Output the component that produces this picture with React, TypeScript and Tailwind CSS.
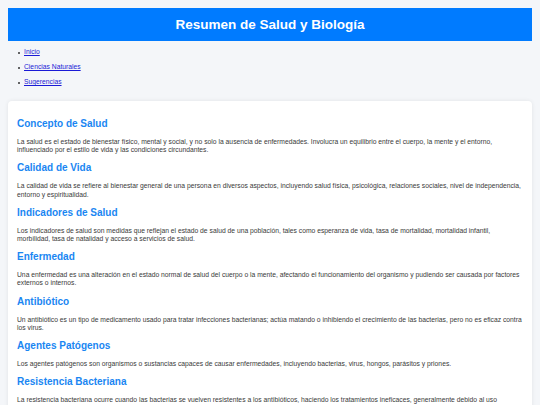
const links = ["Inicio", "Ciencias Naturales", "Sugerencias"];

const sections = [
  {
    title: "Concepto de Salud",
    text: "La salud es el estado de bienestar físico, mental y social, y no solo la ausencia de enfermedades. Involucra un equilibrio entre el cuerpo, la mente y el entorno, influenciado por el estilo de vida y las condiciones circundantes.",
  },
  {
    title: "Calidad de Vida",
    text: "La calidad de vida se refiere al bienestar general de una persona en diversos aspectos, incluyendo salud física, psicológica, relaciones sociales, nivel de independencia, entorno y espiritualidad.",
  },
  {
    title: "Indicadores de Salud",
    text: "Los indicadores de salud son medidas que reflejan el estado de salud de una población, tales como esperanza de vida, tasa de mortalidad, mortalidad infantil, morbilidad, tasa de natalidad y acceso a servicios de salud.",
  },
  {
    title: "Enfermedad",
    text: "Una enfermedad es una alteración en el estado normal de salud del cuerpo o la mente, afectando el funcionamiento del organismo y pudiendo ser causada por factores externos o internos.",
  },
  {
    title: "Antibiótico",
    text: "Un antibiótico es un tipo de medicamento usado para tratar infecciones bacterianas; actúa matando o inhibiendo el crecimiento de las bacterias, pero no es eficaz contra los virus.",
  },
  {
    title: "Agentes Patógenos",
    text: "Los agentes patógenos son organismos o sustancias capaces de causar enfermedades, incluyendo bacterias, virus, hongos, parásitos y priones.",
  },
  {
    title: "Resistencia Bacteriana",
    text: "La resistencia bacteriana ocurre cuando las bacterias se vuelven resistentes a los antibióticos, haciendo los tratamientos ineficaces, generalmente debido al uso inadecuado de medicamentos.",
  },
];

export default function App() {
  return (
    <div className="w-[540px] h-[405px] overflow-hidden bg-[#f4f6f9] px-[8px] pt-[8px] font-['Liberation_Sans',Arial,sans-serif]">
      <header className="h-[33px] bg-[#007bff] flex items-center justify-center">
        <h1 className="text-white font-bold text-[13.5px] leading-none">
          Resumen de Salud y Biología
        </h1>
      </header>

      <nav className="pt-[4px] pl-[10px]">
        <ul className="flex flex-col">
          {links.map((l) => (
            <li key={l} className="h-[15px] flex items-center gap-[4px]">
              <span className="w-[2px] h-[2px] bg-[#333] rounded-full" />
              <a
                href="#"
                className="text-[6.75px] text-[#1a1ad6] underline leading-none"
              >
                {l}
              </a>
            </li>
          ))}
        </ul>
      </nav>

      <main className="mt-[11px] bg-white rounded-[4px] shadow-[0_0_4px_rgba(0,0,0,0.08)] pt-[17px] px-[9px] pb-[20px] flex flex-col gap-[8px]">
        {sections.map((s) => (
          <section key={s.title} className="flex flex-col gap-[8px]">
            <h2 className="text-[#1a86f2] font-bold text-[10px] leading-[12px]">
              {s.title}
            </h2>
            <p className="text-[#3a3a3a] text-[6.75px] leading-[8.2px]">
              {s.text}
            </p>
          </section>
        ))}
      </main>
    </div>
  );
}
